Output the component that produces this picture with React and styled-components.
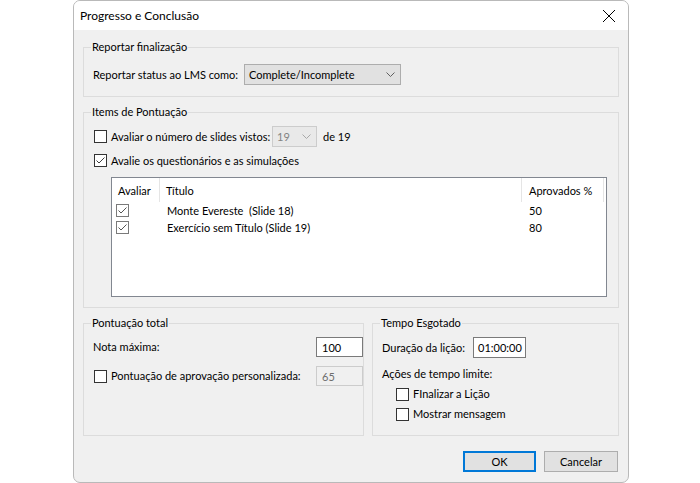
import React from "react";
import styled, { createGlobalStyle } from "styled-components";

const GlobalStyle = createGlobalStyle`
  html, body { margin: 0; padding: 0; background: #ffffff; }
  body {
    font-family: "Segoe UI", "Lato", "Liberation Sans", sans-serif;
    font-size: 11px;
    color: #000;
  }
  * { box-sizing: border-box; }
`;

const Page = styled.div`
  display: flex;
  padding-left: 73px;
`;

const Dialog = styled.div`
  width: 556px;
  height: 483px;
  border: 1px solid #b9b9b9;
  border-radius: 7px;
  overflow: hidden;
  background: #f0f0f0;
  display: flex;
  flex-direction: column;
`;

const TitleBar = styled.div`
  height: 29px;
  background: #ffffff;
  display: flex;
  align-items: center;
  justify-content: space-between;
  padding: 0 6px 0 6px;
  flex: none;
`;

const Title = styled.span`
  font-size: 12px;
  line-height: 16px;
  margin-top: 1px;
`;

const CloseBtn = styled.div`
  width: 16px;
  height: 16px;
  display: flex;
  align-items: center;
  justify-content: center;
  margin-right: 5px;
`;

const Body = styled.div`
  flex: 1;
  padding: 17px 9px 10px 9px;
  display: flex;
  flex-direction: column;
`;

const Group = styled.div`
  position: relative;
  border: 1px solid #dcdcdc;
  height: ${(p) => p.$h}px;
  width: ${(p) => (p.$w ? `${p.$w}px` : "auto")};
  padding: ${(p) => p.$pad || "13px 0 0 9px"};
  margin-top: ${(p) => p.$mt || 0}px;
  display: flex;
  flex-direction: column;
`;

const Legend = styled.span`
  position: absolute;
  top: -9px;
  left: 7px;
  padding: 0 1px;
  background: #f0f0f0;
  line-height: 16px;
`;

const Row = styled.div`
  display: flex;
  align-items: center;
  height: ${(p) => p.$h || 21}px;
  margin-top: ${(p) => p.$mt || 0}px;
  padding-left: ${(p) => p.$indent || 0}px;
  justify-content: ${(p) => (p.$between ? "space-between" : "flex-start")};
`;

const Label = styled.span`
  line-height: 16px;
  white-space: nowrap;
  width: ${(p) => (p.$w ? `${p.$w}px` : "auto")};
  margin-left: ${(p) => p.$ml || 0}px;
  flex: none;
`;

const Select = styled.div`
  width: ${(p) => p.$w}px;
  height: 21px;
  border: 1px solid ${(p) => (p.$disabled ? "#cccccc" : "#adadad")};
  background: ${(p) => (p.$disabled ? "#e9e9e9" : "#e1e1e1")};
  color: ${(p) => (p.$disabled ? "#838383" : "#000")};
  display: flex;
  align-items: center;
  justify-content: space-between;
  padding: 0 5px 0 4px;
  flex: none;
`;

const TextBox = styled.div`
  width: ${(p) => p.$w}px;
  height: ${(p) => p.$h || 20}px;
  border: 1px solid ${(p) => (p.$disabled ? "#cccccc" : "#7a7a7a")};
  background: ${(p) => (p.$disabled ? "#f0f0f0" : "#ffffff")};
  color: ${(p) => (p.$disabled ? "#6d6d6d" : "#000")};
  display: flex;
  align-items: center;
  padding-left: ${(p) => p.$pl || 5}px;
  flex: none;
`;

const Box = styled.span`
  width: 13px;
  height: 13px;
  border: 1px solid ${(p) => (p.$soft ? "#7a7a7a" : "#333333")};
  background: #fff;
  display: inline-flex;
  align-items: center;
  justify-content: center;
  flex: none;
  margin-left: ${(p) => p.$ml || 0}px;
  margin-right: 4px;
`;

const Check = ({ checked, soft, ml }) => (
  <Box $soft={soft} $ml={ml}>
    {checked && (
      <svg width="11" height="11" viewBox="0 0 11 11">
        <polyline
          points="1.5,5.5 4,8 9.5,2.5"
          fill="none"
          stroke={soft ? "#555555" : "#3c3c3c"}
          strokeWidth="1"
        />
      </svg>
    )}
  </Box>
);

const Chevron = ({ color }) => (
  <svg width="9" height="5" viewBox="0 0 9 5">
    <polyline points="0.5,0.5 4.5,4.5 8.5,0.5" fill="none" stroke={color} strokeWidth="1" />
  </svg>
);

const List = styled.div`
  margin-left: 18px;
  margin-top: 6px;
  width: 496px;
  height: 120px;
  border: 1px solid #828790;
  background: #ffffff;
`;

const ListHeader = styled.div`
  display: flex;
  height: 24px;
`;

const HeadCell = styled.div`
  width: ${(p) => p.$w}px;
  padding-left: ${(p) => p.$pl || 6}px;
  border-right: 1px solid #e5e5e5;
  display: flex;
  align-items: center;
  flex: none;
`;

const ListRow = styled.div`
  display: flex;
  height: 17px;
  align-items: center;
`;

const Cell = styled.div`
  width: ${(p) => p.$w}px;
  padding-left: ${(p) => p.$pl || 6}px;
  display: flex;
  align-items: center;
  flex: none;
  white-space: pre;
`;

const Bottom = styled.div`
  display: flex;
  gap: 8px;
  margin-top: 15px;
`;

const Buttons = styled.div`
  display: flex;
  justify-content: flex-end;
  gap: 8px;
  margin-top: 15px;
  padding-right: 1px;
`;

const Button = styled.div`
  width: ${(p) => p.$w}px;
  height: 21px;
  background: #e1e1e1;
  border: ${(p) => (p.$primary ? "2px solid #0078d7" : "1px solid #adadad")};
  display: flex;
  align-items: center;
  justify-content: center;
`;

const items = [
  { title: "Monte Evereste  (Slide 18)", pct: "50" },
  { title: "Exercício sem Título (Slide 19)", pct: "80" },
];

export default function App() {
  return (
    <>
      <GlobalStyle />
      <Page>
        <Dialog>
          <TitleBar>
            <Title>Progresso e Conclusão</Title>
            <CloseBtn>
              <svg width="14" height="14" viewBox="0 0 14 14">
                <path d="M1 1 L13 13 M13 1 L1 13" stroke="#000" strokeWidth="1" fill="none" />
              </svg>
            </CloseBtn>
          </TitleBar>
          <Body>
            <Group $h={50} $pad="16px 0 0 9px">
              <Legend>Reportar finalização</Legend>
              <Row>
                <Label $w={151}>Reportar status ao LMS como:</Label>
                <Select $w={157}>
                  <span>Complete/Incomplete</span>
                  <Chevron color="#606060" />
                </Select>
              </Row>
            </Group>

            <Group $h={196} $mt={15} $pad="13px 0 0 9px">
              <Legend>Items de Pontuação</Legend>
              <Row>
                <Check ml={1} />
                <Label $w={161}>Avaliar o número de slides vistos:</Label>
                <Select $w={45} $disabled>
                  <span>19</span>
                  <Chevron color="#a8a8a8" />
                </Select>
                <Label $ml={6}>de 19</Label>
              </Row>
              <Row $mt={3}>
                <Check ml={1} checked />
                <Label>Avalie os questionários e as simulações</Label>
              </Row>
              <List>
                <ListHeader>
                  <HeadCell $w={48}>Avaliar</HeadCell>
                  <HeadCell $w={362}>Título</HeadCell>
                  <HeadCell $w={82} $pl={7}>Aprovados %</HeadCell>
                </ListHeader>
                {items.map((it) => (
                  <ListRow key={it.title}>
                    <Cell $w={48} $pl={4}>
                      <Check checked soft />
                    </Cell>
                    <Cell $w={362} $pl={7}>{it.title}</Cell>
                    <Cell $w={82} $pl={7}>{it.pct}</Cell>
                  </ListRow>
                ))}
              </List>
            </Group>

            <Bottom>
              <Group $h={113} $w={281} $pad="13px 0 0 9px">
                <Legend>Pontuação total</Legend>
                <Row $h={20} $between>
                  <Label>Nota máxima:</Label>
                  <TextBox $w={47}>100</TextBox>
                </Row>
                <Row $h={20} $mt={9} $between>
                  <Row $h={20}>
                    <Check ml={1} />
                    <Label>Pontuação de aprovação personalizada:</Label>
                  </Row>
                  <TextBox $w={47} $disabled>65</TextBox>
                </Row>
              </Group>
              <Group $h={113} $w={247} $pad="13px 0 0 9px">
                <Legend>Tempo Esgotado</Legend>
                <Row $h={21}>
                  <Label $w={91}>Duração da lição:</Label>
                  <TextBox $w={53} $h={21} $pl={4}>01:00:00</TextBox>
                </Row>
                <Row $h={16} $mt={8}>
                  <Label>Ações de tempo limite:</Label>
                </Row>
                <Row $h={20} $mt={2} $indent={14}>
                  <Check />
                  <Label>FInalizar a Lição</Label>
                </Row>
                <Row $h={20} $indent={14}>
                  <Check />
                  <Label>Mostrar mensagem</Label>
                </Row>
              </Group>
            </Bottom>

            <Buttons>
              <Button $w={73} $primary>OK</Button>
              <Button $w={74}>Cancelar</Button>
            </Buttons>
          </Body>
        </Dialog>
      </Page>
    </>
  );
}
